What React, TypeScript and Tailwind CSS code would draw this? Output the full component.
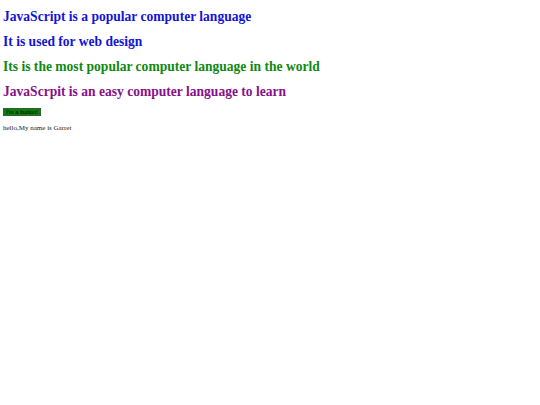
export default function App() {
  return (
    <div className="px-[3px] pt-[4px] font-['Liberation_Serif',serif] bg-white min-h-[405px]">
      <h2 className="text-[13.55px] leading-[25px] font-bold text-[#1414d4]">JavaScript is a popular computer language</h2>
      <h2 className="text-[13.55px] leading-[25px] font-bold text-[#1414d4]">It is used for web design</h2>
      <h2 className="text-[13.55px] leading-[25px] font-bold text-[#118811]">Its is the most popular computer language in the world</h2>
      <h2 className="text-[13.55px] leading-[25px] font-bold text-[#881188]">JavaScrpit is an easy computer language to learn</h2>
      <button className="mt-[4px] block w-[38px] h-[8px] bg-[#0a800a] border border-[#3a5a3a] leading-[6px] text-[5.8px] font-['Liberation_Sans',sans-serif] text-black">
        I'm a button!
      </button>
      <p className="mt-[8px] text-[7px] leading-[9px] text-[#222]">hello,My name is Garret</p>
    </div>
  );
}
